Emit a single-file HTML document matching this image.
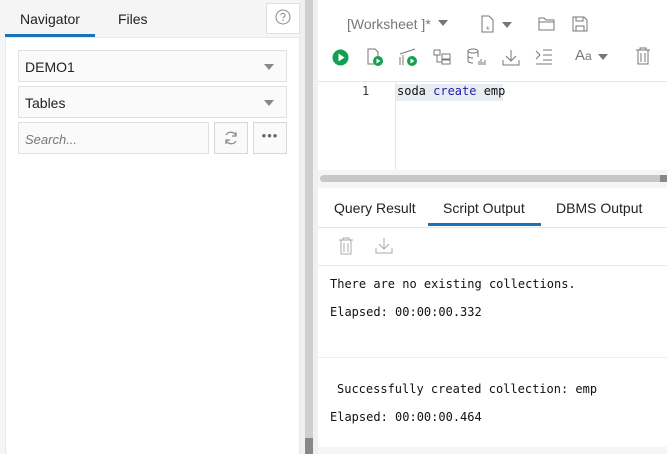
<!DOCTYPE html>
<html><head><style>
*{box-sizing:border-box;margin:0;padding:0}
body{width:667px;height:454px;overflow:hidden;background:#fff;font-family:"Liberation Sans",sans-serif;position:relative}
.abs{position:absolute}
.sel{position:absolute;left:18px;width:269px;height:32px;border:1px solid #e0e0e0;background:#fafafa;font-size:14px;color:#222;padding:8px 6px}
.sel:after{content:"";position:absolute;right:12px;top:13px;border-left:5px solid transparent;border-right:5px solid transparent;border-top:6px solid #888}
.mono{font-family:"DejaVu Sans Mono","Liberation Mono",monospace;font-size:12px;color:#111}
</style></head><body>
<div class="abs" style="left:0;top:0;width:303px;height:454px;background:#f5f5f5"></div>
<div class="abs" style="left:20px;top:11px;font-size:14px;color:#222">Navigator</div>
<div class="abs" style="left:118px;top:11px;font-size:14px;color:#222">Files</div>
<div class="abs" style="left:5px;top:34px;width:90px;height:3px;background:#1a73b8"></div>
<div class="abs" style="left:266px;top:3px;width:34px;height:31px;border:1px solid #e0e0e0;background:#fff"></div>
<svg class="abs" style="left:275px;top:9px" width="16" height="16" viewBox="0 0 16 16"><circle cx="8" cy="8" r="7" fill="none" stroke="#888" stroke-width="1"/><path d="M6 6.3a2 2 0 1 1 2.8 1.8c-.5.3-.8.6-.8 1.3" fill="none" stroke="#888" stroke-width="1"/><circle cx="8" cy="11.5" r=".7" fill="#888"/></svg>
<div class="abs" style="left:5px;top:37px;width:295px;height:417px;background:#fff;border:1px solid #e8e8e8;border-bottom:none"></div>
<div class="sel" style="top:50px">DEMO1</div>
<div class="sel" style="top:86px">Tables</div>
<div class="abs" style="left:18px;top:122px;width:191px;height:32px;border:1px solid #e0e0e0;background:#fafafa;font-size:13px;font-style:italic;color:#777;padding:9px 6px">Search...</div>
<div class="abs" style="left:214px;top:122px;width:34px;height:32px;border:1px solid #d8d8d8;background:#fafafa"></div>
<svg class="abs" style="left:223px;top:130px" width="16" height="16" viewBox="0 0 16 16"><path d="M13 6A5.5 5.5 0 0 0 3 5M3 10a5.5 5.5 0 0 0 10 1" fill="none" stroke="#888" stroke-width="1.2"/><path d="M13 2v4h-4M3 14v-4h4" fill="none" stroke="#888" stroke-width="1.2"/></svg>
<div class="abs" style="left:253px;top:122px;width:34px;height:32px;border:1px solid #d8d8d8;background:#fafafa;text-align:center;font-size:13px;color:#666;line-height:26px;letter-spacing:1px">•••</div>
<div class="abs" style="left:300px;top:0;width:18px;height:454px;background:#f0f0f0"></div>
<div class="abs" style="left:305px;top:0;width:8px;height:454px;background:#cfcfcf"></div>
<div class="abs" style="left:305px;top:438px;width:8px;height:16px;background:#888"></div>
<div class="abs" style="left:318px;top:0;width:349px;height:82px;background:#fff"></div>
<div class="abs" style="left:347px;top:16px;font-size:14px;color:#777">[Worksheet ]*</div>
<svg class="abs" style="left:438px;top:19px" width="10" height="8"><path d="M0 1h10L5 7z" fill="#777"/></svg>
<svg class="abs" style="left:480px;top:15px" width="36" height="20" viewBox="0 0 36 20"><path d="M2 1h7l4 4v12H2z" fill="none" stroke="#777"/><text x="6" y="18" font-size="9" fill="#777">*</text><path d="M22 7l5 6 5-6z" fill="#777"/></svg>
<svg class="abs" style="left:538px;top:16px" width="18" height="16" viewBox="0 0 18 16"><path d="M1 2h5l2 2h8v10H1z M1 6h15" fill="none" stroke="#777"/></svg>
<svg class="abs" style="left:572px;top:16px" width="16" height="16" viewBox="0 0 16 16"><path d="M1 1h11l3 3v11H1z M4 1v4h7V1 M4 15v-5h8v5" fill="none" stroke="#777"/></svg>
<svg class="abs" style="left:332px;top:49px" width="17" height="17"><circle cx="8.5" cy="8.5" r="8" fill="#12a150"/><path d="M6.5 4.5l6 4-6 4z" fill="#fff"/></svg>
<svg class="abs" style="left:366px;top:48px" width="18" height="18"><path d="M2 1h7l3 3v12H2z" fill="none" stroke="#777"/><circle cx="12" cy="13" r="5" fill="#12a150"/><path d="M10.5 10.5l4 2.5-4 2.5z" fill="#fff"/></svg>
<svg class="abs" style="left:399px;top:48px" width="20" height="18"><path d="M1 17V9M4 17V7M1 6l15-5" fill="none" stroke="#777"/><circle cx="13" cy="13" r="5" fill="#12a150"/><path d="M11.5 10.5l4 2.5-4 2.5z" fill="#fff"/></svg>
<svg class="abs" style="left:433px;top:49px" width="18" height="16"><path d="M1 1h6v5H1zM9 5h8v5H9zM9 11h8v4H9zM4 6v7h5" fill="none" stroke="#777"/></svg>
<svg class="abs" style="left:467px;top:48px" width="20" height="18"><ellipse cx="6" cy="3" rx="5" ry="2" fill="none" stroke="#777"/><path d="M1 3v10c0 1 2 2 5 2M11 3v6M1 8c0 1 2 2 5 2M12 17v-4M14 17v-6M16 17v-3M18 17v-5" fill="none" stroke="#777"/></svg>
<svg class="abs" style="left:502px;top:49px" width="18" height="17"><path d="M9 1v11M4 7l5 5 5-5M1 11v5h16v-5" fill="none" stroke="#777"/></svg>
<svg class="abs" style="left:535px;top:49px" width="18" height="16"><path d="M1 2l4 4-4 4M8 1h9M8 6h9M8 11h9M1 15h16" fill="none" stroke="#777"/></svg>
<div class="abs" style="left:575px;top:47px;font-size:15px;color:#777">A<span style="font-size:12px">a</span></div>
<svg class="abs" style="left:598px;top:53px" width="10" height="8"><path d="M0 1h10L5 7z" fill="#777"/></svg>
<svg class="abs" style="left:635px;top:47px" width="16" height="18"><path d="M1 3h14M5 3V1h6v2M3 3v14h10V3M6 6v9M10 6v9" fill="none" stroke="#777"/></svg>
<div class="abs" style="left:318px;top:81px;width:349px;height:1px;background:#e5e5e5"></div>
<div class="abs" style="left:395px;top:82px;width:1px;height:88px;background:#e5e5e5"></div>
<div class="abs mono" style="left:362px;top:84px;color:#333">1</div>
<div class="abs" style="left:396px;top:84px;width:107px;height:17px;background:#e8edf3"></div>
<div class="abs mono" style="left:397px;top:84px">soda <span style="color:#2222aa">create</span> emp</div>
<div class="abs" style="left:318px;top:170px;width:349px;height:18px;background:#f5f5f5"></div>
<div class="abs" style="left:320px;top:175px;width:347px;height:7px;background:#c8c8c8;border-radius:4px"></div>
<div class="abs" style="left:660px;top:175px;width:7px;height:7px;background:#888"></div>
<div class="abs" style="left:318px;top:188px;width:349px;height:40px;background:#fff;border-bottom:1px solid #e5e5e5"></div>
<div class="abs" style="left:334px;top:200px;font-size:14px;color:#222">Query Result</div>
<div class="abs" style="left:443px;top:200px;font-size:14px;color:#222">Script Output</div>
<div class="abs" style="left:556px;top:200px;font-size:14px;color:#222">DBMS Output</div>
<div class="abs" style="left:428px;top:223px;width:113px;height:3px;background:#1a73b8"></div>
<svg class="abs" style="left:338px;top:237px" width="16" height="18"><path d="M1 3h14M5 3V1h6v2M3 3v14h10V3M6 6v9M10 6v9" fill="none" stroke="#aaa"/></svg>
<svg class="abs" style="left:375px;top:237px" width="18" height="17"><path d="M9 1v11M4 7l5 5 5-5M1 11v5h16v-5" fill="none" stroke="#aaa"/></svg>
<div class="abs" style="left:318px;top:265px;width:349px;height:1px;background:#e8e8e8"></div>
<div class="abs mono" style="left:330px;top:277px">There are no existing collections.</div>
<div class="abs mono" style="left:330px;top:305px">Elapsed: 00:00:00.332</div>
<div class="abs" style="left:318px;top:357px;width:349px;height:1px;background:#eee"></div>
<div class="abs mono" style="left:337px;top:382px">Successfully created collection: emp</div>
<div class="abs mono" style="left:330px;top:410px">Elapsed: 00:00:00.464</div>
<div class="abs" style="left:318px;top:447px;width:349px;height:7px;background:#f5f5f5"></div>
</body></html>
